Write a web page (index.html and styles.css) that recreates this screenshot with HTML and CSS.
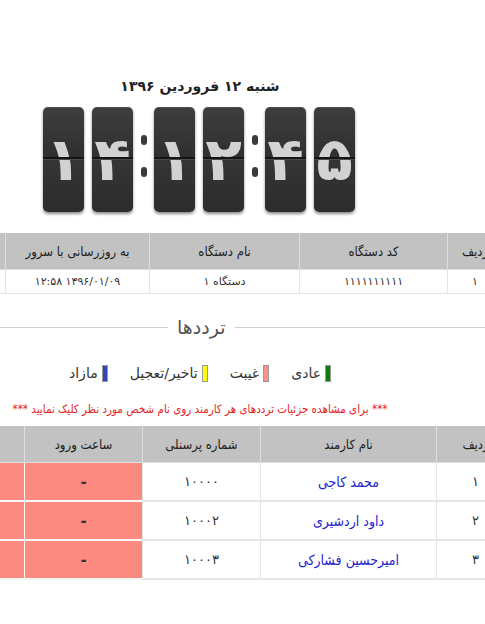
FILE: index.html
```html
<!DOCTYPE html>
<html lang="fa">
<head>
<meta charset="utf-8">
<title>ترددها</title>
<link rel="stylesheet" href="styles.css">
</head>
<body>
<div class="page">
  <div class="top">
    <div class="date">شنبه ۱۲ فروردین ۱۳۹۶</div>
    <div class="clock">
      <div class="card">۱</div>
      <div class="card">۴</div>
      <div class="colon"><span></span><span></span></div>
      <div class="card">۱</div>
      <div class="card">۲</div>
      <div class="colon"><span></span><span></span></div>
      <div class="card">۴</div>
      <div class="card">۵</div>
    </div>
  </div>

  <table class="tbl tbl-devices">
    <colgroup>
      <col class="c-dev1"><col class="c-dev2"><col class="c-dev3"><col class="c-dev4"><col class="c-dev5">
    </colgroup>
    <thead>
      <tr><th>ردیف</th><th>کد دستگاه</th><th>نام دستگاه</th><th>به روزرسانی با سرور</th><th>وضعیت</th></tr>
    </thead>
    <tbody>
      <tr><td>۱</td><td>۱۱۱۱۱۱۱۱۱۱</td><td>دستگاه ۱</td><td>۱۳۹۶/۰۱/۰۹ ۱۲:۵۸</td><td></td></tr>
    </tbody>
  </table>

  <div class="section-title">
    <span class="line line-right"></span>
    <span class="title">ترددها</span>
    <span class="line line-left"></span>
  </div>

  <div class="top">
    <div class="legend">
      <div class="item"><span class="box green"></span><span>عادی</span></div>
      <div class="item"><span class="box pink"></span><span>غیبت</span></div>
      <div class="item"><span class="box yellow"></span><span>تاخیر/تعجیل</span></div>
      <div class="item"><span class="box blue"></span><span>مازاد</span></div>
    </div>
    <div class="note">*** برای مشاهده جزئیات ترددهای هر کارمند روی نام شخص مورد نظر کلیک نمایید ***</div>
  </div>

  <table class="tbl tbl-staff">
    <colgroup>
      <col class="c-st1"><col class="c-st2"><col class="c-st3"><col class="c-st4"><col class="c-st5">
    </colgroup>
    <thead>
      <tr><th>ردیف</th><th>نام کارمند</th><th>شماره پرسنلی</th><th>ساعت ورود</th><th>ساعت خروج</th></tr>
    </thead>
    <tbody>
      <tr><td>۱</td><td><a class="name">محمد کاجی</a></td><td>۱۰۰۰۰</td><td class="absent">-</td><td class="absent">-</td></tr>
      <tr><td>۲</td><td><a class="name">داود اردشیری</a></td><td>۱۰۰۰۲</td><td class="absent">-</td><td class="absent">-</td></tr>
      <tr><td>۳</td><td><a class="name">امیرحسین فشارکی</a></td><td>۱۰۰۰۳</td><td class="absent">-</td><td class="absent">-</td></tr>
    </tbody>
  </table>
</div>
</body>
</html>
```

FILE: styles.css
```css
html, body {
  margin: 0;
  padding: 0;
  background: #fff;
}
body {
  font-family: "DejaVu Sans", sans-serif;
  color: #222;
}
.page {
  direction: rtl;
  width: 485px;
  height: 624px;
  overflow: hidden;
}
.top {
  width: 400px;
  margin-right: 85px;
}
.date {
  text-align: center;
  font-size: 14px;
  font-weight: bold;
  color: #222;
  padding-top: 78px;
  height: 29px;
}
.clock {
  direction: ltr;
  display: flex;
  justify-content: center;
  gap: 8px;
  margin-left: -2px;
}
.card {
  position: relative;
  width: 41px;
  height: 105px;
  border-radius: 5px;
  background: linear-gradient(#3e3e3e, #2f2f2f 48%, #353535 52%, #2c2c2c);
  box-shadow: 0 2px 3px rgba(0, 0, 0, 0.45), inset 0 1px 0 rgba(255,255,255,0.08);
  color: #d2d2d2;
  font-size: 60px;
  font-weight: bold;
  line-height: 105px;
  text-align: center;
}
.card::after {
  content: "";
  position: absolute;
  left: 0;
  right: 0;
  top: 50px;
  height: 2px;
  background: #151515;
  border-bottom: 1px solid #4a4a4a;
}
.colon {
  width: 5px;
  display: flex;
  flex-direction: column;
  align-items: center;
  padding-top: 28px;
  gap: 22px;
}
.colon span {
  width: 6px;
  height: 10px;
  border-radius: 3px;
  background: #3a3a3a;
}

.tbl {
  border-collapse: collapse;
  table-layout: fixed;
}
.tbl th {
  background: #c2c2c2;
  font-family: "DejaVu Sans Condensed", "DejaVu Sans", sans-serif;
  font-stretch: condensed;
  font-weight: normal;
  font-size: 13px;
  color: #1e1e1e;
  border: 1px solid #dedede;
  border-top: 0;
  padding: 0;
  text-align: center;
  white-space: nowrap;
  overflow: hidden;
}
.tbl td {
  border: 1px solid #e3e3e3;
  text-align: center;
  padding: 0;
  white-space: nowrap;
  overflow: hidden;
  color: #333;
}
.tbl-devices {
  margin-top: 21px;
  margin-right: -18px;
  width: 617px;
}
.tbl-devices th { height: 36px; }
.tbl-devices td { height: 23px; font-size: 11px; }
.c-dev1 { width: 55px; }
.c-dev2 { width: 148px; }
.c-dev3 { width: 150px; }
.c-dev4 { width: 144px; }
.c-dev5 { width: 120px; }

.section-title {
  display: flex;
  align-items: center;
  margin-top: 18px;
  height: 30px;
}
.line {
  height: 1px;
  background: #cfcfcf;
}
.line-right { flex: 1; }
.line-left { width: 168px; }
.title {
  font-size: 19px;
  color: #555;
  padding: 0 9px;
  line-height: 30px;
}

.legend {
  display: flex;
  justify-content: center;
  gap: 22px;
  margin-top: 21px;
  font-size: 14px;
  color: #333;
  height: 20px;
  align-items: center;
}
.item {
  display: flex;
  align-items: center;
  gap: 4px;
}
.box {
  width: 4px;
  height: 15px;
  border: 1px solid #999;
}
.green { background: #0d7d0d; }
.pink { background: #f79189; }
.yellow { background: #ffff00; }
.blue { background: #3545b5; }

.note {
  margin-top: 19px;
  text-align: center;
  font-family: "DejaVu Sans Condensed", "DejaVu Sans", sans-serif;
  font-stretch: condensed;
  font-size: 11.5px;
  color: #e52424;
  white-space: nowrap;
  height: 16px;
}

.tbl-staff {
  margin-top: 8px;
  margin-right: -30px;
  width: 610px;
}
.tbl-staff th { height: 36px; }
.tbl-staff td {
  height: 37px;
  font-size: 13px;
  border: 1px solid #e6e6e6;
  border-width: 1px 1px 2px 1px;
}
.c-st1 { width: 78px; }
.c-st2 { width: 176px; }
.c-st3 { width: 118px; }
.c-st4 { width: 118px; }
.c-st5 { width: 120px; }
.name {
  color: #2323d0;
  font-family: "DejaVu Sans Condensed", "DejaVu Sans", sans-serif;
  font-stretch: condensed;
  font-size: 14px;
  cursor: pointer;
}
.tbl-staff td.absent {
  background: #fd8a80;
  border-color: #f7f7f7;
  font-weight: bold;
  color: #333;
  font-size: 15px;
}
```
